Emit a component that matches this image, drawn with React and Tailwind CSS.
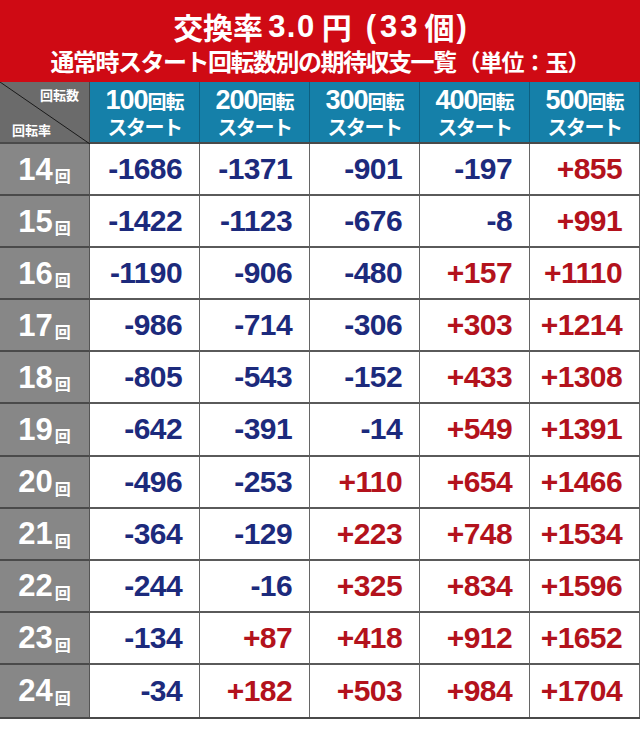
import React from "react";

const rows = [
  [14, -1686, -1371, -901, -197, 855],
  [15, -1422, -1123, -676, -8, 991],
  [16, -1190, -906, -480, 157, 1110],
  [17, -986, -714, -306, 303, 1214],
  [18, -805, -543, -152, 433, 1308],
  [19, -642, -391, -14, 549, 1391],
  [20, -496, -253, 110, 654, 1466],
  [21, -364, -129, 223, 748, 1534],
  [22, -244, -16, 325, 834, 1596],
  [23, -134, 87, 418, 912, 1652],
  [24, -34, 182, 503, 984, 1704],
];

const sans = { fontFamily: '"Liberation Sans", Arial, "Noto Sans CJK JP", sans-serif' };
const cjk = { fontFamily: '"Noto Sans CJK JP", sans-serif' };

export default function App() {
  return (
    <div className="w-[640px] h-[731px] bg-white overflow-hidden" style={sans}>
      <div className="h-[82px] bg-[#cf0a14] flex flex-col items-center text-white font-bold">
        <div className="mt-[8px] h-[36px] flex items-center leading-none">
          <span style={cjk} className="font-bold text-[30px]">交換率</span>
          <span className="ml-[5px] text-[31px] tracking-[1.5px]">3.0</span>
          <span style={cjk} className="ml-[6px] font-bold text-[30px]">円</span>
          <span className="ml-[14px] text-[31px]">(</span>
          <span className="ml-[4px] text-[31px] tracking-[3px]">33</span>
          <span style={cjk} className="ml-[4px] font-bold text-[30px]">個</span>
          <span className="ml-[2px] text-[31px]">)</span>
        </div>
        <div className="mt-[2px] h-[30px] flex items-center leading-none" style={cjk}>
          <span className="text-[24px] font-bold tracking-[-1.5px]">通常時スタート回転数別の期待収支一覧</span>
          <span className="text-[23px] font-bold ml-[2px] tracking-[-1px]">（単位：玉）</span>
        </div>
      </div>
      <div className="grid grid-cols-[90px_repeat(5,110px)] h-[62px] border-b-2 border-[#4a4a4a]">
        <div className="relative bg-[#6b6b6b] border-r border-[#444] text-white font-bold text-[13px] leading-none" style={cjk}>
          <svg className="absolute inset-0" width="90" height="62" viewBox="0 0 90 62">
            <line x1="0" y1="0" x2="90" y2="62" stroke="#1a1a1a" strokeWidth="1" />
          </svg>
          <span className="absolute right-[10px] top-[6px]">回転数</span>
          <span className="absolute left-[12px] bottom-[6px]">回転率</span>
        </div>
        {[100, 200, 300, 400, 500].map((n) => (
          <div key={n} className="bg-[#1580a9] border-r border-[#0e5f80] text-white font-bold flex flex-col items-center justify-center leading-none">
            <div className="flex items-baseline">
              <span className="text-[27px] tracking-[-1px]" style={sans}>{n}</span>
              <span className="text-[19px] tracking-[-1px]" style={cjk}>回転</span>
            </div>
            <div className="text-[20px] mt-[3px] tracking-[-1.5px]" style={cjk}>スタート</div>
          </div>
        ))}
      </div>
      <div className="grid grid-cols-[90px_repeat(5,110px)] grid-rows-[repeat(11,1fr)] h-[575px] border-b-2 border-[#4a4a4a]">
        {rows.map((r, i) => (
          <React.Fragment key={r[0]}>
            <div className={`bg-[#878787] border-r border-[#555] flex items-center justify-center text-white font-bold ${i < 10 ? "border-b-2 border-b-[#4a4a4a]" : ""}`}>
              <span className="text-[31px] leading-none tracking-[0px]">{r[0]}</span>
              <span className="text-[16px] leading-none ml-[2px] mt-[12px]" style={cjk}>回</span>
            </div>
            {r.slice(1).map((v, j) => (
              <div
                key={j}
                className={`border-r border-[#666] flex items-center justify-end pr-[17px] font-bold text-[30px] leading-none tracking-[-0.6px] ${i < 10 ? "border-b-2 border-b-[#5a5a5a]" : ""} ${v > 0 ? "text-[#b3121c]" : "text-[#1c2a7c]"}`}
              >
                {v > 0 ? `+${v}` : `${v}`}
              </div>
            ))}
          </React.Fragment>
        ))}
      </div>
    </div>
  );
}
